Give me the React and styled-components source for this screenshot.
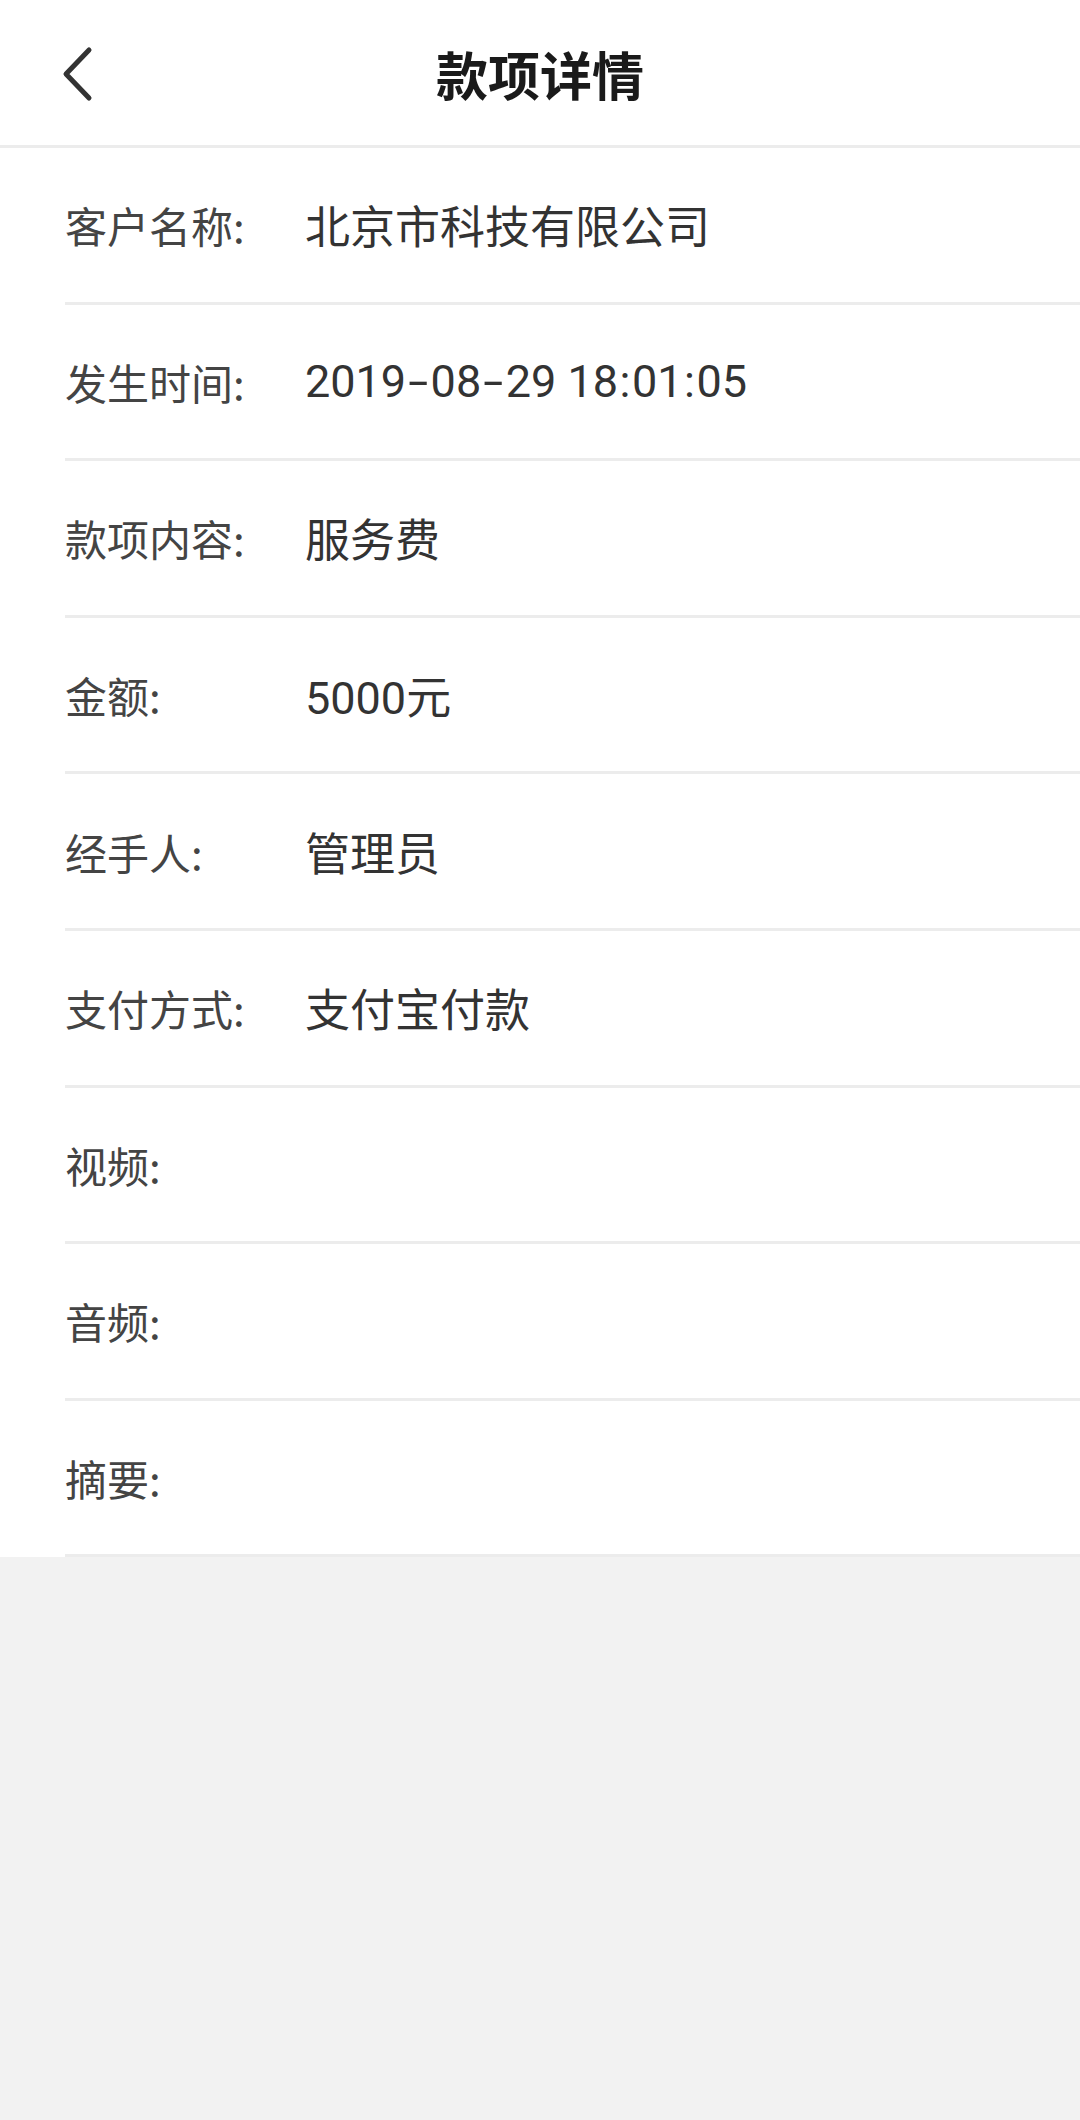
import React from 'react';
import styled, { createGlobalStyle } from 'styled-components';

const GlobalStyle = createGlobalStyle`
  html, body {
    margin: 0;
    padding: 0;
    background: #f2f2f2;
  }
  body {
    font-family: 'Roboto', 'Noto Sans CJK SC', sans-serif;
  }
`;

const Page = styled.div`
  width: 1080px;
  min-height: 2120px;
  background: #f2f2f2;
`;

const Header = styled.header`
  position: relative;
  height: 145px;
  background: #fff;
  border-bottom: 3px solid #ececec;
  display: flex;
  align-items: center;
  justify-content: center;
`;

const BackButton = styled.button`
  position: absolute;
  left: 40px;
  top: 30px;
  width: 70px;
  height: 84px;
  padding: 0;
  border: none;
  background: none;
  display: flex;
  align-items: center;
  justify-content: center;
  cursor: pointer;
`;

const Title = styled.h1`
  margin: 0;
  font-size: 52px;
  font-weight: 700;
  color: #1a1a1a;
  font-family: 'Noto Sans CJK SC', sans-serif;
  line-height: 1;
  margin-top: 2px;
`;

const List = styled.div`
  background: #fff;
`;

const Row = styled.div`
  height: 156.6px;
  box-sizing: border-box;
  margin-left: 65px;
  border-bottom: 3px solid #ececec;
  display: flex;
  align-items: center;
`;

const Label = styled.span`
  width: 240px;
  flex-shrink: 0;
  font-size: 42px;
  color: #444;
  font-family: 'Noto Sans CJK SC', sans-serif;
`;

const Value = styled.span`
  font-size: 45px;
  color: #333;
  font-family: 'Roboto', 'Noto Sans CJK SC', sans-serif;
`;

// the device font draws a wide dash in dates
const Dash = styled.span`
  display: inline-block;
  margin: 0 6px;
  transform: scaleX(1.6);
`;

const Colon = styled.span`
  margin: 0 1.5px;
`;

const rows = [
  ['客户名称:', '北京市科技有限公司'],
  ['发生时间:', '2019-08-29 18:01:05'],
  ['款项内容:', '服务费'],
  ['金额:', '5000元'],
  ['经手人:', '管理员'],
  ['支付方式:', '支付宝付款'],
  ['视频:', ''],
  ['音频:', ''],
  ['摘要:', ''],
];

const renderValue = (text) =>
  text.split(/([-:])/).map((part, i) => {
    if (part === '-') return <Dash key={i}>-</Dash>;
    if (part === ':') return <Colon key={i}>:</Colon>;
    return part;
  });

const ChevronLeft = () => (
  <svg width="40" height="60" viewBox="0 0 40 60">
    <path
      d="M34 8 L11 32 L34 56"
      fill="none"
      stroke="#333"
      strokeWidth="5"
      strokeLinecap="round"
      strokeLinejoin="round"
    />
  </svg>
);

export default function App() {
  return (
    <Page>
      <GlobalStyle />
      <Header>
        <BackButton aria-label="返回">
          <ChevronLeft />
        </BackButton>
        <Title>款项详情</Title>
      </Header>
      <List>
        {rows.map(([label, value]) => (
          <Row key={label}>
            <Label>{label}</Label>
            <Value>{renderValue(value)}</Value>
          </Row>
        ))}
      </List>
    </Page>
  );
}
